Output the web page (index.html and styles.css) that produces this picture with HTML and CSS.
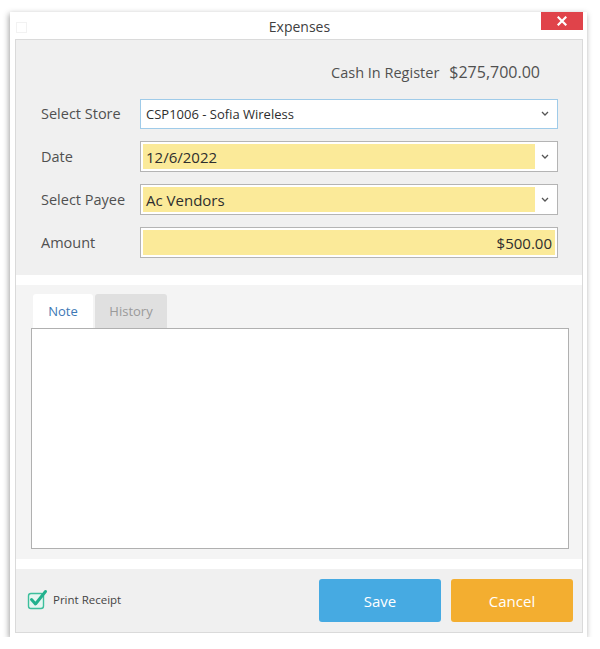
FILE: index.html
```html
<!DOCTYPE html>
<html>
<head>
<meta charset="utf-8">
<link rel="stylesheet" href="styles.css">
</head>
<body>
<div class="window">
  <div class="titlebar">
    <span class="app-icon"></span>
    <span class="title">Expenses</span>
    <div class="close">
      <svg width="10" height="10" viewBox="0 0 10 10"><path d="M1.5 1.5 L8.5 8.5 M8.5 1.5 L1.5 8.5" stroke="#fff" stroke-width="2.2" stroke-linecap="square"/></svg>
    </div>
  </div>
  <div class="panel">
    <div class="form-section">
      <div class="cash-row">
        <span class="cash-label">Cash In Register</span>
        <span class="cash-value">$275,700.00</span>
      </div>
      <div class="fields">
        <div class="field-row">
          <span class="label">Select Store</span>
          <div class="combo combo-focus">
            <div class="combo-value plain">CSP1006 - Sofia Wireless</div>
            <div class="combo-arrow"><svg width="8" height="5" viewBox="0 0 8 5"><path d="M1 1 L4 4 L7 1" fill="none" stroke="#555" stroke-width="1.3"/></svg></div>
          </div>
        </div>
        <div class="field-row">
          <span class="label">Date</span>
          <div class="combo">
            <div class="combo-value yellow big">12/6/2022</div>
            <div class="combo-arrow"><svg width="8" height="5" viewBox="0 0 8 5"><path d="M1 1 L4 4 L7 1" fill="none" stroke="#555" stroke-width="1.3"/></svg></div>
          </div>
        </div>
        <div class="field-row">
          <span class="label">Select Payee</span>
          <div class="combo">
            <div class="combo-value yellow big">Ac Vendors</div>
            <div class="combo-arrow"><svg width="8" height="5" viewBox="0 0 8 5"><path d="M1 1 L4 4 L7 1" fill="none" stroke="#555" stroke-width="1.3"/></svg></div>
          </div>
        </div>
        <div class="field-row">
          <span class="label">Amount</span>
          <div class="combo">
            <div class="combo-value yellow big amount">$500.00</div>
          </div>
        </div>
      </div>
    </div>
    <div class="band"></div>
    <div class="notes-section">
      <div class="tabs">
        <div class="tab active">Note</div>
        <div class="tab">History</div>
      </div>
      <div class="note-box"></div>
    </div>
    <div class="band"></div>
    <div class="footer">
      <label class="print">
        <svg class="check" width="22" height="22" viewBox="0 0 22 22">
          <rect x="2.5" y="5.5" width="15" height="15" rx="2.5" fill="#e6f6f1" stroke="#3cbf9c" stroke-width="1.4"/>
          <path d="M5.5 11.5 L9.5 16 L19.5 3.5" fill="none" stroke="#22b18d" stroke-width="3" stroke-linecap="round" stroke-linejoin="round"/>
        </svg>
        <span>Print Receipt</span>
      </label>
      <div class="buttons">
        <div class="btn save">Save</div>
        <div class="btn cancel">Cancel</div>
      </div>
    </div>
  </div>
</div>
</body>
</html>
```

FILE: styles.css
```css
html, body {
  margin: 0;
  padding: 0;
  background: #ffffff;
}
body {
  font-family: "Open Sans", "Noto Sans", sans-serif;
  color: #555;
}
.window {
  margin: 12px 0 0 10px;
  width: 577px;
  height: 625px;
  background: #ffffff;
  box-shadow: -1px 2px 6px rgba(0,0,0,0.38);
  display: flex;
  flex-direction: column;
}
.titlebar {
  height: 27px;
  position: relative;
  display: flex;
  align-items: center;
  justify-content: center;
}
.app-icon {
  position: absolute;
  left: 6px;
  top: 10px;
  width: 9px;
  height: 9px;
  border: 1px solid #f2f2f2;
}
.title {
  font-size: 14px;
  color: #404040;
  margin-left: 2px;
  margin-top: 2px;
}
.close {
  position: absolute;
  right: 4px;
  top: 0;
  width: 42px;
  height: 18px;
  background: #e0434a;
  display: flex;
  align-items: center;
  justify-content: center;
}
.panel {
  margin: 0 4px 4px 5px;
  border: 1px solid #dadada;
  flex: 1;
  display: flex;
  flex-direction: column;
}
.form-section {
  background: #f0f0f0;
  height: 235px;
  box-sizing: border-box;
  padding: 21px 24px 0 25px;
}
.cash-row {
  height: 22px;
  display: flex;
  justify-content: flex-end;
  align-items: center;
  padding-right: 18px;
  gap: 10px;
}
.cash-label {
  font-size: 14.5px;
  color: #505050;
}
.cash-value {
  font-size: 16px;
  color: #505050;
}
.fields {
  margin-top: 15px;
  display: flex;
  flex-direction: column;
  gap: 12px;
}
.field-row {
  display: flex;
  align-items: center;
  height: 31px;
}
.label {
  width: 99px;
  font-size: 14.5px;
  color: #505050;
}
.combo {
  flex: 1;
  height: 31px;
  box-sizing: border-box;
  border: 1px solid #b4b4b4;
  background: #fff;
  padding: 2px;
  display: flex;
}
.combo-focus {
  border-color: #9fcbe9;
  height: 30px;
}
.combo-value {
  flex: 1;
  display: flex;
  align-items: center;
  padding-left: 3px;
  color: #2e2e2e;
  font-size: 13px;
}
.combo-value.big {
  font-size: 15px;
}
.combo-value.yellow {
  background: #fbea99;
}
.combo-value.amount {
  justify-content: flex-end;
  padding-right: 3px;
}
.combo-arrow {
  width: 20px;
  display: flex;
  align-items: center;
  justify-content: center;
}
.band {
  height: 10px;
  background: #ffffff;
}
.notes-section {
  background: #f4f4f4;
  height: 274px;
  box-sizing: border-box;
  padding: 9px 13px 10px 15px;
  display: flex;
  flex-direction: column;
}
.tabs {
  display: flex;
  gap: 2px;
  margin-left: 2px;
  height: 34px;
}
.tab {
  border-radius: 3px 3px 0 0;
  background: #e0e0e0;
  color: #9a9a9a;
  font-size: 13px;
  display: flex;
  align-items: center;
  justify-content: center;
  width: 72px;
}
.tab.active {
  background: #ffffff;
  color: #3d78b5;
  width: 60px;
}
.note-box {
  flex: 1;
  background: #fff;
  border: 1px solid #b0b0b0;
}
.footer {
  flex: 1;
  background: #f0f0f0;
  display: flex;
  justify-content: space-between;
  padding: 10px 9px 0 10px;
  align-items: flex-start;
}
.print {
  display: flex;
  align-items: center;
  gap: 5px;
  margin-top: 9px;
  font-size: 11.5px;
  color: #444;
}
.check {
  display: block;
}
.buttons {
  display: flex;
  gap: 10px;
}
.btn {
  width: 122px;
  height: 43px;
  border-radius: 3px;
  color: #fff;
  font-size: 15px;
  display: flex;
  align-items: center;
  justify-content: center;
}
.save {
  background: #46aae2;
}
.cancel {
  background: #f3ae30;
}
```
